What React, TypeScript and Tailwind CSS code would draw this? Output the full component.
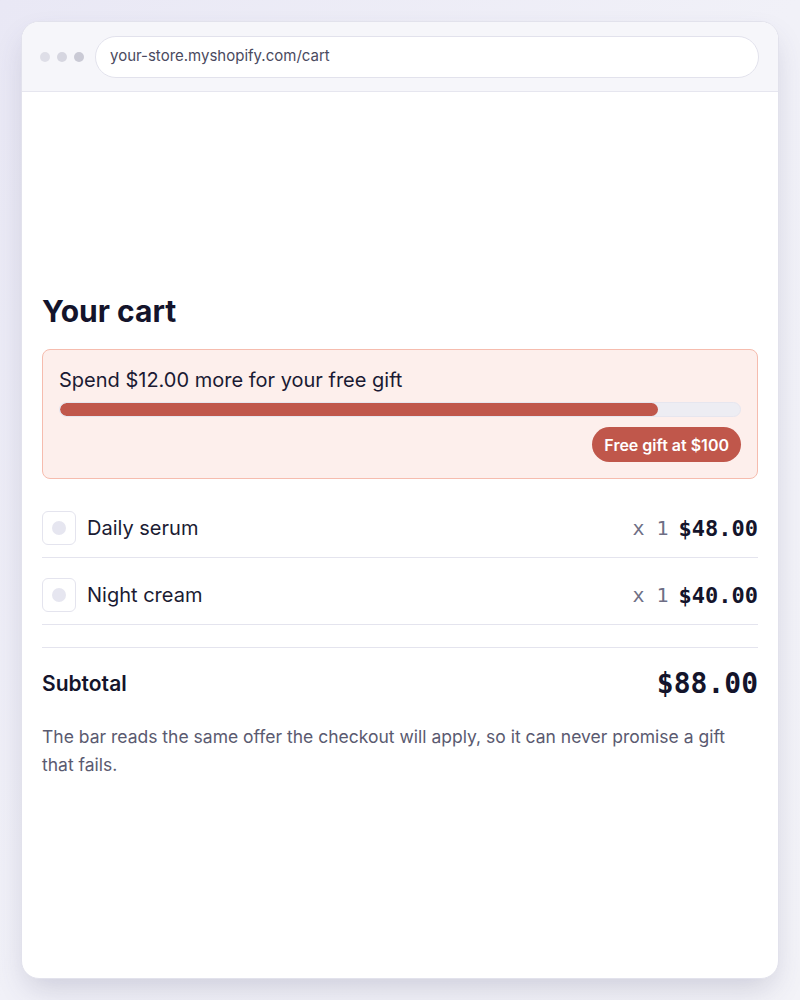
const items = [
  { name: 'Daily serum', qty: 1, price: '$48.00' },
  { name: 'Night cream', qty: 1, price: '$40.00' },
];

const mono = { fontFamily: '"DejaVu Sans Mono", "Liberation Mono", monospace' };

export default function App() {
  const spent = 88;
  const goal = 100;
  const pct = Math.min(100, (spent / goal) * 100);

  return (
    <div
      className="h-[1000px] w-full bg-gradient-to-br from-[#e9e8f5] via-[#f1f1f8] to-[#f3f3f8] pt-[21px] px-[21px]"
      style={{ fontFamily: 'Inter, "Noto Sans", sans-serif' }}
    >
      <div className="flex h-[958px] flex-col overflow-hidden rounded-[18px] border border-[#e2e2ec] bg-white shadow-[0_14px_30px_-6px_rgba(70,70,110,0.22)]">
        {/* browser chrome */}
        <div className="flex h-[70px] shrink-0 items-center border-b border-[#e6e6ef] bg-[#f6f6fa] pl-[18px] pr-[19px]">
          <div className="flex gap-[7px]">
            <span className="h-[10px] w-[10px] rounded-full bg-[#dedee7]" />
            <span className="h-[10px] w-[10px] rounded-full bg-[#d6d6e0]" />
            <span className="h-[10px] w-[10px] rounded-full bg-[#cacad5]" />
          </div>
          <div className="ml-[11px] flex h-[42px] flex-1 items-center rounded-full border border-[#e2e2ec] bg-white px-[14px] text-[15px] text-[#4a4a60]">
            your-store.myshopify.com/cart
          </div>
        </div>

        {/* page body */}
        <div className="flex flex-1 flex-col px-5 pt-[201px]">
          <h1 className="mb-5 text-[30px] font-bold leading-9 text-[#14142b]">Your cart</h1>

          <div className="rounded-lg border border-[#f6bcae] bg-[#fdefec] p-4">
            <p className="text-[20px] leading-7 text-[#1a1a33]">Spend $12.00 more for your free gift</p>
            <div className="mt-2 h-[15px] overflow-hidden rounded-full border border-[#e6e6ef] bg-[#ededf3]">
              <div className="h-full rounded-full bg-[#c0574b]" style={{ width: `${pct}%` }} />
            </div>
            <div className="mt-[10px] flex justify-end">
              <span className="flex h-[35px] items-center rounded-full bg-[#c0574b] px-3 text-[16px] font-semibold text-white">
                Free gift at $100
              </span>
            </div>
          </div>

          <ul className="mt-3">
            {items.map((it) => (
              <li key={it.name} className="flex items-center border-b border-[#e4e4ee] pb-3 pt-5">
                <span className="flex h-[34px] w-[34px] items-center justify-center rounded-md border border-[#e4e4ee] bg-white">
                  <span className="h-[14px] w-[14px] rounded-full bg-[#e6e6f0]" />
                </span>
                <span className="ml-[11px] text-[20px] text-[#1b1b33]">{it.name}</span>
                <span className="ml-auto text-[20px] text-[#6e6e85]" style={mono}>
                  x {it.qty}
                </span>
                <span className="ml-[10px] text-[22px] font-bold text-[#14142b]" style={mono}>
                  {it.price}
                </span>
              </li>
            ))}
          </ul>

          <div className="mt-[22px] flex h-[72px] items-center justify-between border-t border-[#e4e4ee]">
            <span className="text-[21px] font-semibold text-[#14142b]">Subtotal</span>
            <span className="text-[28px] font-bold text-[#14142b]" style={mono}>
              $88.00
            </span>
          </div>

          <p className="mt-1 text-[17.5px] leading-7 text-[#5a5a70]">
            The bar reads the same offer the checkout will apply, so it can never promise a gift that fails.
          </p>
        </div>
      </div>
    </div>
  );
}
